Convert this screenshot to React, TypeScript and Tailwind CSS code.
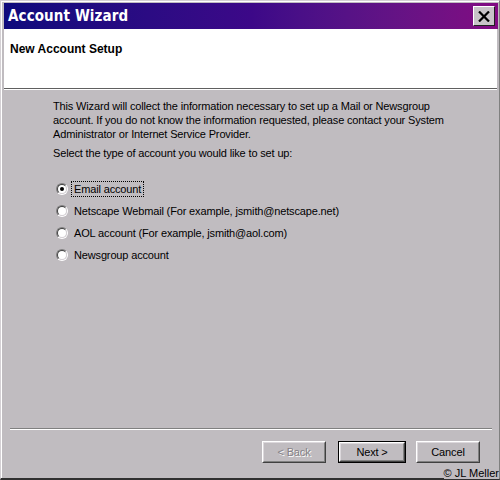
import React from "react";

function Radio({ checked }: { checked?: boolean }) {
  return (
    <span className="relative inline-block w-[12px] h-[12px] shrink-0">
      <span className="absolute inset-0 rounded-full border border-t-[#808080] border-l-[#808080] border-b-white border-r-white" />
      <span className="absolute inset-[1px] rounded-full border border-t-[#404040] border-l-[#404040] border-b-[#d4d0d4] border-r-[#d4d0d4] bg-white" />
      {checked && <span className="absolute left-[4px] top-[4px] w-[4px] h-[4px] rounded-full bg-black" />}
    </span>
  );
}

function Btn({ label, disabled, def, w }: { label: string; disabled?: boolean; def?: boolean; w: string }) {
  return (
    <div className={`${w} h-[22px] ${def ? "border border-black" : ""}`}>
      <div className="w-full h-full border border-t-white border-l-white border-b-[#404040] border-r-[#404040]">
        <div className="w-full h-full border border-t-[#dcd8dc] border-l-[#dcd8dc] border-b-[#808080] border-r-[#808080] flex items-center justify-center text-[11px] tracking-[-0.15px]">
          {disabled ? (
            <span className="text-[#858185] [text-shadow:1px_1px_0_#ffffff]">{label}</span>
          ) : (
            <span className="text-black">{label}</span>
          )}
        </div>
      </div>
    </div>
  );
}

export default function App() {
  return (
    <div className="w-[500px] h-[480px] bg-[#c0bcc0] overflow-hidden relative" style={{ fontFamily: '"Liberation Sans", Arial, sans-serif' }}>
      <div className="w-full h-full border-l border-t border-l-[#d4d0d4] border-t-[#d4d0d4] border-b-2 border-b-[#303030] border-r border-r-[#808080] flex flex-col">
        <div className="flex-1 border-l border-t border-l-white border-t-white flex flex-col pl-[2px] pt-[1px]">
          {/* Title bar */}
          <div className="h-[26px] bg-gradient-to-r from-[#0e0a7c] via-[#3c0888] to-[#820a82] flex items-center justify-between pl-[4px] pr-[3px] mr-[1px]">
            <span className="text-white font-bold text-[15px] tracking-[0.1px]" style={{ fontFamily: '"DejaVu Sans Condensed", "DejaVu Sans", sans-serif' }}>Account Wizard</span>
            <div className="w-[22px] h-[20px] bg-[#c8c4c8] border border-t-white border-l-white border-b-[#202020] border-r-[#202020] flex items-center justify-center">
              <svg width="12" height="11" viewBox="0 0 12 11">
                <path d="M1 0.5 L11 10.5 M11 0.5 L1 10.5" stroke="#000" strokeWidth="2.2" />
              </svg>
            </div>
          </div>
          {/* Header */}
          <div className="h-[59px] bg-white pl-[6px] pt-[7px] mr-[2px]">
            <span className="font-bold text-[12px] text-black leading-[14px]">New Account Setup</span>
          </div>
          <div className="h-[1px] bg-[#606060] mr-[2px]" />
          <div className="h-[1px] bg-white mr-[2px]" />
          {/* Body */}
          <div className="flex-1 flex flex-col pl-[49px] pt-[9px] text-[11px] tracking-[-0.15px] text-black">
            <div className="leading-[14px]">
              This Wizard will collect the information necessary to set up a Mail or Newsgroup
              <br />
              account. If you do not know the information requested, please contact your System
              <br />
              Administrator or Internet Service Provider.
            </div>
            <div className="leading-[14px] mt-[5px]">Select the type of account you would like to set up:</div>
            <div className="flex flex-col mt-[21px] pl-[3px] gap-[6px]">
              <div className="flex items-center h-[16px]">
                <Radio checked />
                <span className="ml-[3px] px-[2px] border border-dotted border-black leading-[14px]">Email account</span>
              </div>
              <div className="flex items-center h-[16px]">
                <Radio />
                <span className="ml-[6px] leading-[14px]">Netscape Webmail (For example, jsmith@netscape.net)</span>
              </div>
              <div className="flex items-center h-[16px]">
                <Radio />
                <span className="ml-[6px] leading-[14px]">AOL account (For example, jsmith@aol.com)</span>
              </div>
              <div className="flex items-center h-[16px]">
                <Radio />
                <span className="ml-[6px] leading-[14px]">Newsgroup account</span>
              </div>
            </div>
            <div className="flex-1" />
          </div>
          {/* Separator */}
          <div className="ml-[6px] mr-[7px]">
            <div className="h-[1px] bg-[#808080]" />
            <div className="h-[1px] bg-white" />
          </div>
          {/* Buttons */}
          <div className="flex justify-end pr-[19px] pt-[11px] h-[48px]">
            <Btn label="< Back" disabled w="w-[64px]" />
            <div className="w-[12px]" />
            <Btn label="Next >" def w="w-[68px]" />
            <div className="w-[10px]" />
            <Btn label="Cancel" w="w-[64px]" />
          </div>
        </div>
      </div>
      <div className="absolute right-[1px] bottom-[1px] text-[11px] leading-[11px] text-black bg-[#c0bcc0]">© JL Meller</div>
    </div>
  );
}
